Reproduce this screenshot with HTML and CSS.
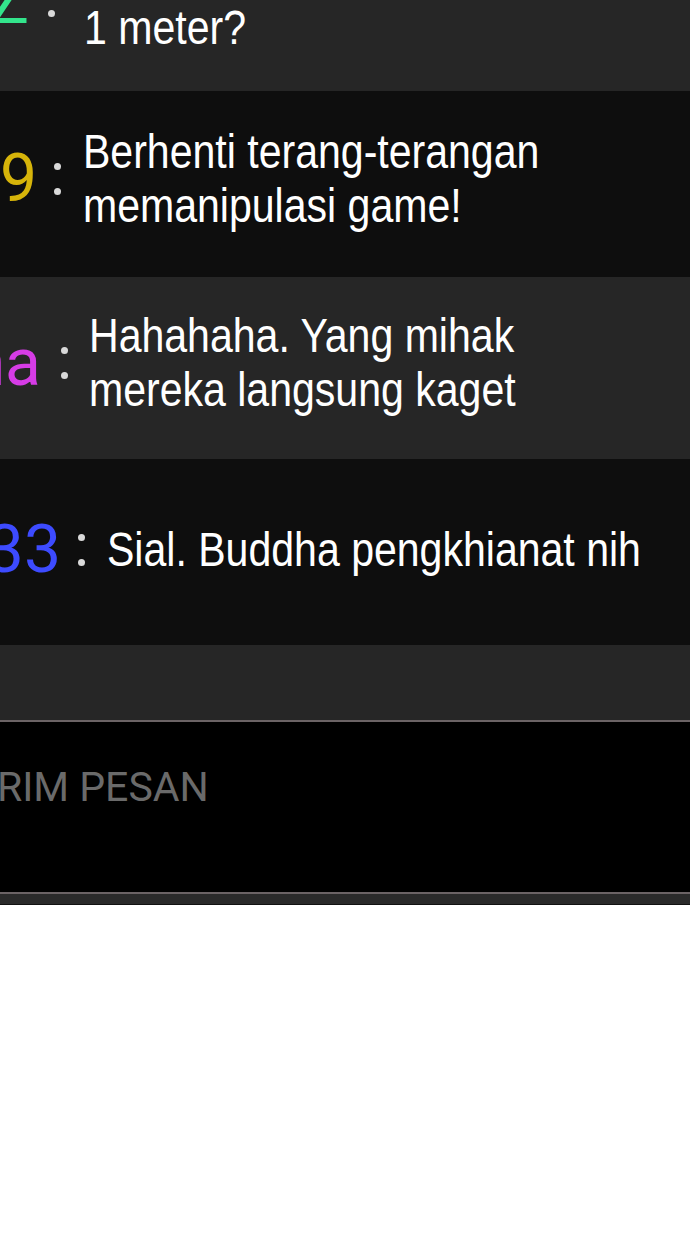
FILE: index.html
```html
<!DOCTYPE html>
<html lang="id">
<head>
<meta charset="utf-8">
<title>Chat</title>
<link rel="stylesheet" href="styles.css">
</head>
<body>
<div class="app">
  <div class="chat">
    <div class="row row--light row--first">
      <div class="name name--green name--w28"><span>Z</span></div>
      <div class="colon colon--wide"><i></i><i></i></div>
      <div class="msg">Kok dia yakin sanggup lompat<br>1 meter?</div>
    </div>
    <div class="row row--dark row--tall">
      <div class="name name--yellow name--w36"><span>9</span></div>
      <div class="colon"><i></i><i></i></div>
      <div class="msg">Berhenti terang-terangan<br>memanipulasi game!</div>
    </div>
    <div class="row row--light row--mid">
      <div class="name name--magenta name--w40"><span>Mana</span></div>
      <div class="colon colon--r3"><i></i><i></i></div>
      <div class="msg">Hahahaha. Yang mihak<br>mereka langsung kaget</div>
    </div>
    <div class="row row--dark row--tall row--single">
      <div class="name name--blue name--w60"><span>233</span></div>
      <div class="colon"><i></i><i></i></div>
      <div class="msg">Sial. Buddha pengkhianat nih</div>
    </div>
    <div class="row row--light row--empty"></div>
  </div>
  <div class="composer">
    <div class="input">
      <span class="placeholder">KIRIM PESAN</span>
    </div>
    <div class="composer-strip"></div>
  </div>
</div>
</body>
</html>
```
FILE: styles.css
```css
* { box-sizing: border-box; }
html, body { margin: 0; padding: 0; background: #ffffff; }
body { width: 690px; height: 1238px; overflow: hidden; }

.app {
  display: flex;
  flex-direction: column;
  overflow: hidden;
}

.chat {
  display: flex;
  flex-direction: column;
  margin-top: -78px;
}

.row {
  display: flex;
  align-items: center;
  padding: 0 0 11px 0;
  overflow: hidden;
}
.row--light { background: #262626; }
.row--dark { background: #0e0e0e; }
.row--first { height: 169px; }
.row--tall { height: 186px; }
.row--mid { height: 182px; }
.row--single { padding-bottom: 5px; }
.row--empty { height: 75px; padding: 0; }

.name {
  flex: none;
  display: flex;
  justify-content: flex-end;
  overflow: hidden;
  white-space: nowrap;
  font-family: Roboto, "Noto Sans", sans-serif;
  font-size: 66px;
  line-height: 1;
}
.name--w28 { width: 29px; }
.name--w36 { width: 37px; }
.name--w40 { width: 41px; }
.name--w60 { width: 61px; }
.name--green { color: #33e58c; }
.name--yellow { color: #d6b40a; }
.name--magenta { color: #d63ce6; }
.name--blue { color: #3d4bff; }

.colon {
  flex: none;
  display: flex;
  flex-direction: column;
  gap: 18px;
  margin: 0 22px 0 17px;
}
.colon--wide { margin: 0 29px 0 19px; }
.colon--r3 { margin: 0 21px 0 20px; }
.colon i {
  display: block;
  width: 7px;
  height: 7px;
  border-radius: 50%;
  background: #d9d9d9;
}

.msg {
  flex: none;
  white-space: nowrap;
  font-family: "Liberation Sans", Arial, sans-serif;
  font-size: 48px;
  line-height: 54px;
  color: #ffffff;
  transform: scaleX(0.855);
  transform-origin: 0 50%;
}

.composer {
  display: flex;
  flex-direction: column;
}
.input {
  height: 174px;
  background: #000000;
  border-top: 2px solid #6b6365;
  border-bottom: 2px solid #6b6365;
  padding-top: 41px;
  overflow: hidden;
}
.placeholder {
  display: block;
  margin-left: -40px;
  font-family: Roboto, "Noto Sans", sans-serif;
  font-size: 41px;
  color: #6a6a6a;
  white-space: nowrap;
}
.composer-strip {
  height: 11px;
  background: #2a2a2a;
  border-bottom: 1px solid #111111;
}
```
